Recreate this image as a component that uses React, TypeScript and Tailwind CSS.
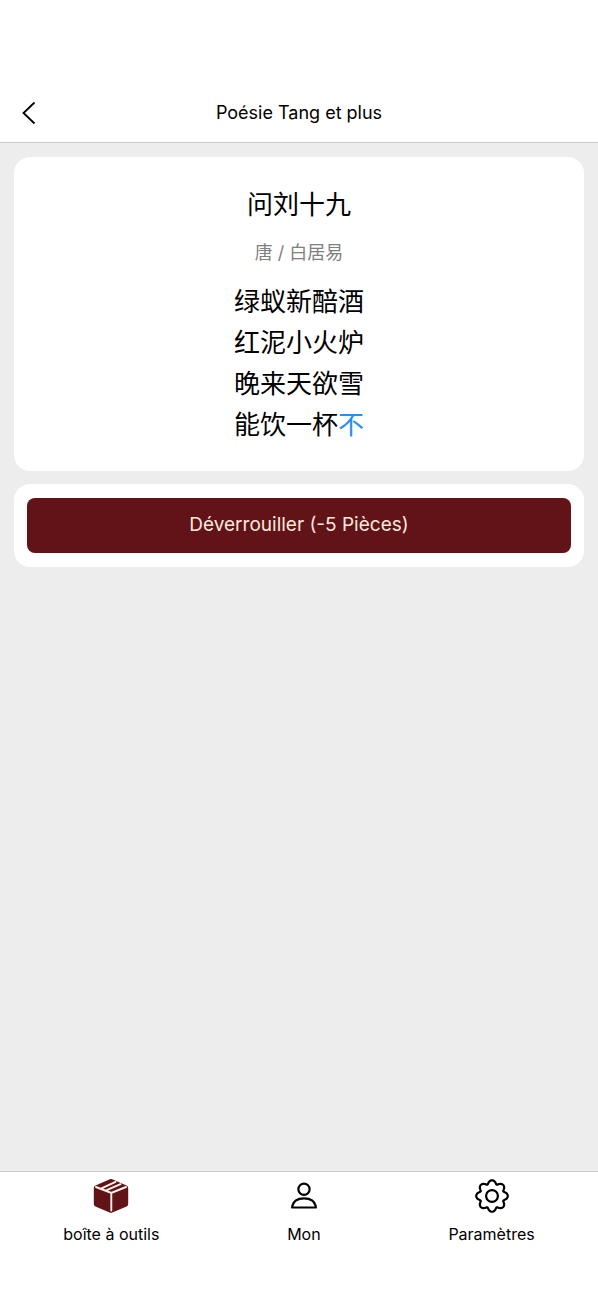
import React, { useState } from 'react';

const verses = ['绿蚁新醅酒', '红泥小火炉', '晚来天欲雪'];

const gearPath =
  Array.from({ length: 96 }, (_, i) => {
    const angle = (i / 96) * Math.PI * 2;
    const r = 14 + 1.8 * Math.cos(angle * 8);
    // swing each point sideways a little so the teeth get rounder heads
    const a = angle + 0.045 * Math.sin(angle * 8);
    return `${i ? 'L' : 'M'}${(18 + r * Math.sin(a)).toFixed(2)} ${(18 - r * Math.cos(a)).toFixed(2)}`;
  }).join('') + 'Z';

function BoxIcon() {
  return (
    <svg viewBox="0 0 36 36" className="size-9" aria-hidden="true">
      <path
        d="M16.8 1.3Q18 .7 19.2 1.3L33.5 7.5Q35.2 8.3 35.2 10V26Q35.2 27.7 33.6 28.5L19.3 34.5Q18 35 16.7 34.5L2.4 28.5Q.8 27.7 .8 26V10Q.8 8.3 2.5 7.5Z"
        fill="#611318"
      />
      <path
        d="M3 9L18.3 15L33 9M18.3 15V32.5M8 10.6L22.5 3.8M12.6 12.6L27.5 6.2"
        fill="none"
        stroke="#fff3ea"
        strokeWidth="1.9"
        strokeLinecap="round"
      />
    </svg>
  );
}

function UserIcon() {
  return (
    <svg viewBox="0 0 36 36" className="size-9" fill="none" stroke="#000" strokeWidth="2.2" strokeLinejoin="round" aria-hidden="true">
      <circle cx="18" cy="11.2" r="5.6" />
      <path d="M6.5 29.5C6.1 29.5 6 29 6.2 28.3C7.3 23.2 12 20.4 18 20.4S28.7 23.2 29.8 28.3C30 29 29.9 29.5 29.5 29.5Z" />
    </svg>
  );
}

function GearIcon() {
  return (
    <svg viewBox="0 0 36 36" className="size-9" fill="none" stroke="#000" strokeWidth="2.2" strokeLinejoin="round" aria-hidden="true">
      <path d={gearPath} />
      <circle cx="18" cy="18" r="5.9" />
    </svg>
  );
}

const tabs = [
  { id: 'tools', label: 'boîte à outils', Icon: BoxIcon },
  { id: 'me', label: 'Mon', Icon: UserIcon },
  { id: 'settings', label: 'Paramètres', Icon: GearIcon },
];

export default function App() {
  const [active, setActive] = useState('tools');

  return (
    <div className="min-h-screen flex flex-col bg-[#ededed] text-black font-[Inter,'Noto_Sans_CJK_SC',sans-serif]">
      <header className="grid grid-cols-[56px_1fr_56px] items-center bg-white border-b border-[#cccccc] pt-21 h-[143px]">
        <button type="button" aria-label="Retour" className="h-full flex items-center pl-5">
          <svg viewBox="0 0 18 26" className="w-[18px] h-[26px]" fill="none" stroke="#000" strokeWidth="1.8" aria-hidden="true">
            <path d="M14.5 2.5L3.5 13L14.5 23.5" />
          </svg>
        </button>
        <h1 className="text-center text-[18px] leading-6">Poésie Tang et plus</h1>
      </header>

      <main className="flex-1 flex flex-col gap-[13px] p-3.5">
        <article className="bg-white rounded-2xl px-4 pt-7 pb-6.5 text-center">
          <h2 className="text-[26px] leading-10">问刘十九</h2>
          <p className="mt-3.5 text-[18px] leading-7 text-[#808080]">唐 / 白居易</p>
          <div className="mt-3.5 text-[26px] leading-[41px]">
            {verses.map((verse) => (
              <p key={verse}>{verse}</p>
            ))}
            <p>
              能饮一杯<span className="text-[#2490ee]">不</span>
            </p>
          </div>
        </article>

        <section className="bg-white rounded-2xl px-[13px] py-3.5">
          <button type="button" className="w-full h-[55px] rounded-lg bg-[#611318] text-[#fbe9dc] text-[19px]">
            Déverrouiller (-5 Pièces)
          </button>
        </section>
      </main>

      <nav className="flex justify-around items-start bg-white border-t border-[#cccccc] pt-1.5 h-[129px]">
        {tabs.map(({ id, label, Icon }) => (
          <button
            key={id}
            type="button"
            aria-current={active === id ? 'page' : undefined}
            onClick={() => setActive(id)}
            className="flex flex-col items-center gap-2.5"
          >
            <Icon />
            <span className="text-[16px] leading-5">{label}</span>
          </button>
        ))}
      </nav>
    </div>
  );
}
